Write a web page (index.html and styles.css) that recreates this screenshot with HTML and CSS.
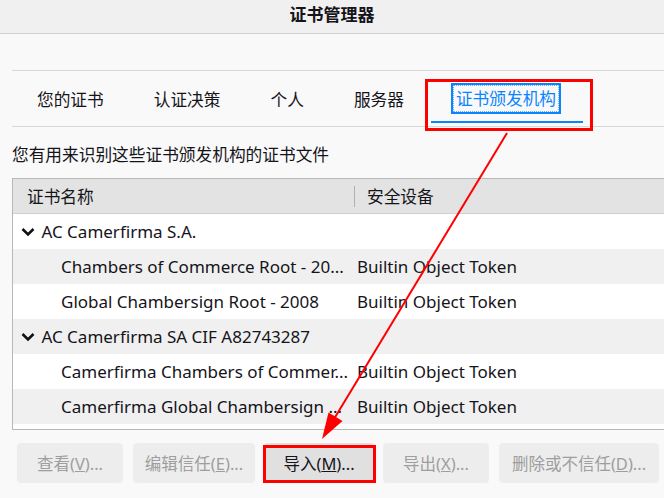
FILE: index.html
```html
<!DOCTYPE html>
<html>

<head>
    <title>证书管理器</title>
    <link rel="stylesheet" href="styles.css">
</head>

<body>

    <div class="titlebar">证书管理器</div>

    <div class="content">
        <div class="tabs">
            <div class="tab">您的证书</div>
            <div class="tab">认证决策</div>
            <div class="tab">个人</div>
            <div class="tab">服务器</div>
            <div class="tab selected"><span class="focus">证书颁发机构</span></div>
        </div>

        <p class="desc">您有用来识别这些证书颁发机构的证书文件</p>

        <div class="tree">
            <div class="tree-head">
                <div class="col-name">证书名称</div>
                <div class="col-device">安全设备</div>
            </div>
            <div class="row">
                <div class="cell group">
                    <svg class="twisty" width="14" height="10" viewBox="0 0 14 10">
                        <path d="M1.5 2 L7 7.5 L12.5 2" fill="none" stroke="#111" stroke-width="2.6" />
                    </svg>
                    AC Camerfirma S.A.
                </div>
                <div class="cell"></div>
            </div>
            <div class="row odd">
                <div class="cell child">Chambers of Commerce Root - 20...</div>
                <div class="cell">Builtin Object Token</div>
            </div>
            <div class="row">
                <div class="cell child">Global Chambersign Root - 2008</div>
                <div class="cell">Builtin Object Token</div>
            </div>
            <div class="row odd">
                <div class="cell group">
                    <svg class="twisty" width="14" height="10" viewBox="0 0 14 10">
                        <path d="M1.5 2 L7 7.5 L12.5 2" fill="none" stroke="#111" stroke-width="2.6" />
                    </svg>
                    AC Camerfirma SA CIF A82743287
                </div>
                <div class="cell"></div>
            </div>
            <div class="row">
                <div class="cell child">Camerfirma Chambers of Commer...</div>
                <div class="cell">Builtin Object Token</div>
            </div>
            <div class="row odd">
                <div class="cell child">Camerfirma Global Chambersign ...</div>
                <div class="cell">Builtin Object Token</div>
            </div>
        </div>

        <div class="buttons">
            <button class="btn w-view" disabled>查看(<u>V</u>)...</button>
            <button class="btn w-edit" disabled>编辑信任(<u>E</u>)...</button>
            <button class="btn w-import">导入(<u>M</u>)...</button>
            <button class="btn w-export" disabled>导出(<u>X</u>)...</button>
            <button class="btn w-delete" disabled>删除或不信任(<u>D</u>)...</button>
        </div>
    </div>

    <!-- annotation overlay -->
    <svg class="marks" width="664" height="498" viewBox="0 0 664 498">
        <rect x="426.5" y="80.5" width="165" height="49" fill="none" stroke="#ff0000" stroke-width="3" />
        <rect x="264.5" y="446.5" width="110" height="35" fill="none" stroke="#ff0000" stroke-width="3" />
        <line x1="507" y1="133" x2="334" y2="419" stroke="#ff0000" stroke-width="2" />
        <polygon points="322,439 342.5,421 328.5,412.5" fill="#ff0000" />
    </svg>

</body>
</html>
```

FILE: styles.css
```css
body {
    font-family: "Noto Sans", "Noto Sans CJK SC", sans-serif;
    margin: 0;
    background-color: #f9f9f9;
    color: #15141a;
    overflow: hidden;
}

.titlebar {
    height: 30px;
    padding-bottom: 3px;
    line-height: 30px;
    text-align: center;
    font-size: 17px;
    font-weight: bold;
    background-color: #f0f0f0;
    border-bottom: 1px solid #d2d2d2;
}

.content {
    padding: 36px 0 0 12px;
}

.tabs {
    display: flex;
    height: 55px;
    border-top: 1px solid #d8d8d8;
    border-bottom: 1px solid #d8d8d8;
}

.tab {
    display: flex;
    align-items: center;
    padding: 0 25px;
    font-size: 16.7px;
}

.tab.selected {
    margin-left: 2px;
    padding: 0 24px 0 22px;
    color: #0a84ff;
    box-shadow: inset 0 -3px 0 #f9f9f9, inset 0 -5px 0 #0a84ff;
}

.tab .focus {
    padding: 2px 2px;
    border: 1px dotted #6aaef5;
    outline: 2px solid #0a84ff;
    line-height: 21px;
}

.desc {
    margin: 16px 0 11px;
    font-size: 16.7px;
    line-height: 24px;
}

.tree {
    height: 250px;
    border-top: 1px solid #b8b8b8;
    border-left: 1px solid #b8b8b8;
    border-bottom: 1px solid #b8b8b8;
    background-color: #fff;
}

.tree-head {
    display: grid;
    grid-template-columns: 342px 1fr;
    align-items: center;
    height: 34px;
    background-color: #e3e3e3;
    border-bottom: 1px solid #cfcfcf;
    font-size: 16.7px;
}

.tree-head .col-name {
    padding-left: 14px;
    border-right: 1px solid #b0b0b0;
    line-height: 21px;
}

.tree-head .col-device {
    padding-left: 12px;
}

.row {
    display: grid;
    grid-template-columns: 342px 1fr;
    align-items: center;
    height: 35px;
    font-size: 17px;
}

.row.odd {
    background-color: #f0f0f0;
}

.cell {
    white-space: nowrap;
    overflow: hidden;
}

.cell + .cell {
    padding-left: 2px;
}

.cell.group {
    padding-left: 8px;
}

.cell.child {
    padding-left: 48px;
}

.twisty {
    margin-right: 2px;
    vertical-align: 1px;
}

.buttons {
    display: flex;
    gap: 9px;
    margin-top: 13px;
    padding-left: 5px;
}

.btn {
    height: 40px;
    padding: 0;
    font-family: inherit;
    font-size: 16.5px;
    color: #15141a;
    background-color: #e0e0e0;
    border: none;
    border-radius: 4px;
}

.btn:disabled {
    color: #9e9e9e;
    background-color: #ededed;
}

.w-view {
    width: 106px;
}

.w-edit {
    width: 122px;
    margin-left: 1px;
}

.w-import {
    width: 110px;
}

.w-export {
    width: 106px;
}

.w-delete {
    width: 160px;
    margin-left: 1px;
}

.marks {
    position: absolute;
    top: 0;
    left: 0;
}
```
